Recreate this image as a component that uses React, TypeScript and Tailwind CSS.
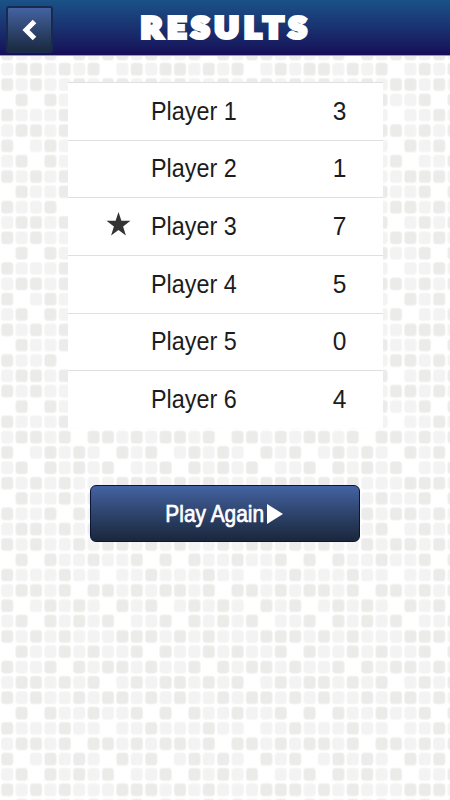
import React from "react";

const players = [
  { name: "Player 1", score: 3 },
  { name: "Player 2", score: 1 },
  { name: "Player 3", score: 7 },
  { name: "Player 4", score: 5 },
  { name: "Player 5", score: 0 },
  { name: "Player 6", score: 4 },
];

const best = Math.max(...players.map((p) => p.score));

// D = dark tile, L = light tile, _ = empty
const tiles = [
  "DLDLLDLDDL",
  "_D_DLLDLLD",
  "DLLLDLL_LL",
  "LDDLD_DDLD",
  "D_LDLDL_DL",
  "LD_DLDLD_L",
  "DLDLDLLLDD",
  "_DLLDLDLLD",
  "DLLD_DLDDL",
  "LDDLDLD_LD",
];

const Background: React.FC = () => (
  <svg className="absolute inset-0 w-full h-full" aria-hidden="true">
    <defs>
      <pattern id="tiles" width="144" height="153.3" patternUnits="userSpaceOnUse" patternTransform="translate(0 76.8)">
        {tiles.map((row, r) =>
          row.split("").map((t, c) =>
            t === "_" ? null : (
              <rect
                key={`${r}-${c}`}
                x={1.3 + c * 14.4}
                y={1.5 + r * 15.33}
                width="11.8"
                height="12.5"
                rx="3"
                fill={t === "D" ? "#ebebea" : "#f3f3f3"}
                stroke={t === "D" ? "#f4f4f3" : "#f8f8f8"}
                strokeWidth="0.8"
              />
            )
          )
        )}
      </pattern>
    </defs>
    <rect width="100%" height="100%" fill="url(#tiles)" />
  </svg>
);

const Header: React.FC = () => (
  <header className="relative flex items-start h-14 bg-linear-to-b from-[#1a5288] to-[#160e58] border-b border-[#9c98c4]">
    <button
      className="ml-1.5 mt-1.5 w-[47px] h-[47px] shrink-0 flex items-center justify-center rounded-[3px] border-2 border-[#182a50] bg-linear-to-b from-[#4463a2] to-[#1b2a41]"
      aria-label="Back"
    >
      <svg width="16" height="22" viewBox="0 0 16 22">
        <path d="M12.5 2.5L4 11L12.5 19.5" fill="none" stroke="#fff" strokeWidth="5" />
      </svg>
    </button>
    <h1 className="ml-[88px] mt-[7px] origin-left scale-x-[1.14] font-['Lato'] font-black text-[28px] leading-10 tracking-[5px] text-white [-webkit-text-stroke:4.2px_white]">
      RESULTS
    </h1>
  </header>
);

const App: React.FC = () => {
  return (
    <div className="relative w-[450px] h-[800px] overflow-hidden bg-white font-['Liberation_Sans',sans-serif]">
      <Background />
      <Header />

      {/* Scores */}
      <ul className="relative mt-[26px] ml-[68px] w-[315px] h-[346px] bg-white">
        {players.map((p) => (
          <li key={p.name} className="flex items-center h-[57.7px] border-t-[1.5px] border-[#e0e0e0] text-[25px] text-[#1c1c1c]">
            <span className="w-[83px] pl-[38px] -mt-1.5">
              {p.score === best && (
                <svg width="25" height="24" viewBox="0 0 25 24" fill="#333">
                  <path d="M12.5 0L15.4 8.8H24.5L17.1 14.4L19.9 23.4L12.5 17.9L5.1 23.4L7.9 14.4L0.5 8.8H9.6Z" />
                </svg>
              )}
            </span>
            <span className="w-[176px] origin-left scale-x-[0.935]">{p.name}</span>
            <span className="w-[25px] text-center scale-x-[0.98]">{p.score}</span>
          </li>
        ))}
      </ul>

      <button className="relative mt-[57px] ml-[90px] w-[270px] h-[57px] flex items-center justify-center rounded-md border-[1.5px] border-[#0a1638] bg-linear-to-b from-[#4463a2] to-[#1a273c] text-white">
        <span className="-ml-[3px] w-[101px] flex justify-center">
          <span className="shrink-0 whitespace-nowrap text-[24px] leading-7 scale-x-[0.87] [-webkit-text-stroke:0.7px_white]">Play Again</span>
        </span>
        <svg width="16" height="20" viewBox="0 0 16 20" fill="#fff" className="ml-[2px]">
          <path d="M0 0L16 10L0 20Z" />
        </svg>
      </button>
    </div>
  );
};

export default App;
